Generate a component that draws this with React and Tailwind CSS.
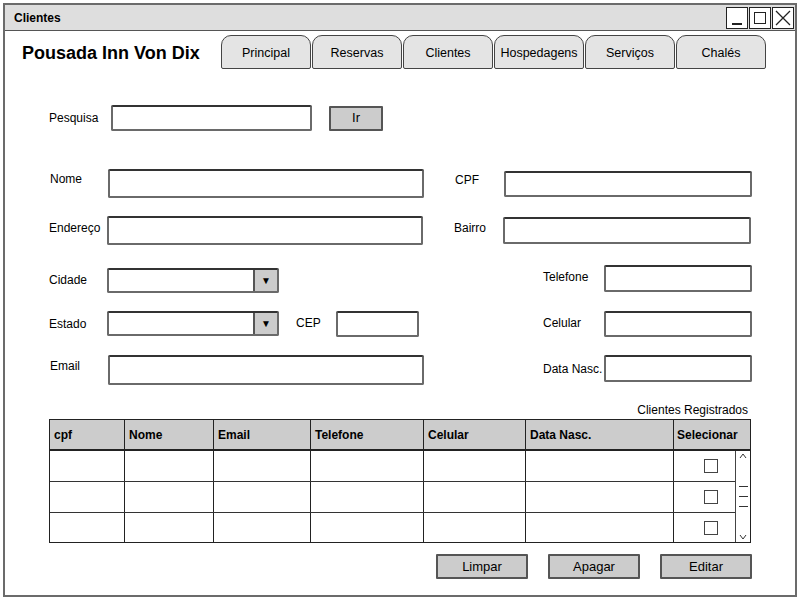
import React from "react";

const tabs = ["Principal", "Reservas", "Clientes", "Hospedagens", "Serviços", "Chalés"];
const cols = [
    { name: "cpf", w: "w-[75px]" },
    { name: "Nome", w: "w-[89px]" },
    { name: "Email", w: "w-[97px]" },
    { name: "Telefone", w: "w-[113px]" },
    { name: "Celular", w: "w-[102px]" },
    { name: "Data Nasc.", w: "w-[148px]" },
];

function Input({ className }) {
    return (
        <div
            className={
                "border-2 border-[#6a6a6a] border-t-[#333] rounded-[2px] bg-white " +
                className
            }
        />
    );
}

function Select() {
    return (
        <div className="flex w-[172px] h-[25px] border-2 border-[#6a6a6a] border-t-[#333] rounded-[2px] bg-white">
            <div className="flex-1" />
            <div className="w-[24px] bg-[#cccccc] border-l-2 border-[#555] flex items-center justify-center text-[10px] text-black">
                ▼
            </div>
        </div>
    );
}

function Label({ children, className }) {
    return <div className={"text-[12px] text-black " + className}>{children}</div>;
}

function GrayButton({ children, className }) {
    return (
        <button
            className={
                "h-[25px] bg-[#cccccc] border-2 border-[#555] rounded-[1px] text-[13px] text-black flex items-center justify-center " +
                className
            }
        >
            {children}
        </button>
    );
}

export default function App() {
    return (
        <div className="w-[800px] h-[600px] bg-white pt-[3px] pl-[3px] font-['Comic_Sans_MS','Liberation_Sans',sans-serif] text-black">
            <div className="w-[794px] h-[594px] border-2 border-[#6b6b6b] flex flex-col">
                {/* title bar */}
                <div className="h-[26px] bg-[#dedede] border-b border-[#555] flex items-center pl-[9px] pr-[1px]">
                    <span className="text-[12px] font-bold flex-1">Clientes</span>
                    <div className="flex gap-[1px]">
                        <div className="w-[22px] h-[22px] border border-[#222] bg-white flex items-end justify-center pb-[3px]">
                            <div className="w-[10px] h-[1.5px] bg-[#222]" />
                        </div>
                        <div className="w-[22px] h-[22px] border border-[#222] bg-white flex items-center justify-center">
                            <div className="w-[12px] h-[12px] border-[1.5px] border-[#222]" />
                        </div>
                        <div className="w-[22px] h-[22px] border border-[#222] bg-white flex items-center justify-center">
                            <svg width="16" height="16" viewBox="0 0 16 16" stroke="#222" strokeWidth="1.3">
                                <path d="M1 1 L15 15 M15 1 L1 15" />
                            </svg>
                        </div>
                    </div>
                </div>

                {/* header */}
                <div className="flex items-center mt-[4px] h-[34px]">
                    <div className="w-[216px] pl-[17px] text-[18px] font-bold whitespace-nowrap pt-[3px]">
                        Pousada Inn Von Dix
                    </div>
                    <div className="flex gap-[1px]">
                        {tabs.map((t) => (
                            <div
                                key={t}
                                className="w-[90px] h-[34px] bg-[#e4e4e4] border border-[#444] rounded-t-[10px] rounded-b-[2px] flex justify-center pt-[8px] text-[12.5px] whitespace-nowrap"
                            >
                                {t}
                            </div>
                        ))}
                    </div>
                </div>

                {/* pesquisa */}
                <div className="flex items-center mt-[36px] h-[26px]">
                    <Label className="ml-[44px] w-[62px]">Pesquisa</Label>
                    <Input className="w-[201px] h-[26px]" />
                    <GrayButton className="ml-[17px] w-[54px] text-[12px]">Ir</GrayButton>
                </div>

                {/* nome / cpf */}
                <div className="flex items-center mt-[38px] h-[29px]">
                    <Label className="ml-[45px] w-[58px] pb-[9px]">Nome</Label>
                    <Input className="w-[316px] h-[29px]" />
                    <Label className="ml-[31px] w-[49px] pb-[8px]">CPF</Label>
                    <Input className="w-[248px] h-[26px]" />
                </div>

                {/* endereco / bairro */}
                <div className="flex items-center mt-[18px] h-[29px]">
                    <Label className="ml-[44px] w-[58px] pb-[6px]">Endereço</Label>
                    <Input className="w-[316px] h-[29px]" />
                    <Label className="ml-[31px] w-[49px] pb-[6px]">Bairro</Label>
                    <Input className="w-[248px] h-[27px]" />
                </div>

                {/* cidade / telefone */}
                <div className="flex items-center mt-[19px] h-[28px]">
                    <Label className="ml-[44px] w-[58px] pt-[4px]">Cidade</Label>
                    <div className="pt-[4px]">
                        <Select />
                    </div>
                    <Label className="ml-[264px] w-[61px] pb-[2px]">Telefone</Label>
                    <Input className="w-[148px] h-[27px]" />
                </div>

                {/* estado / cep / celular */}
                <div className="flex items-center mt-[18px] h-[27px]">
                    <Label className="ml-[44px] w-[58px]">Estado</Label>
                    <Select />
                    <Label className="ml-[17px] w-[40px] pb-[2px]">CEP</Label>
                    <Input className="w-[83px] h-[26px]" />
                    <Label className="ml-[124px] w-[61px] pb-[2px]">Celular</Label>
                    <Input className="w-[148px] h-[26px]" />
                </div>

                {/* email / data nasc */}
                <div className="flex items-center mt-[18px] h-[30px]">
                    <Label className="ml-[45px] w-[58px] pb-[8px]">Email</Label>
                    <Input className="w-[316px] h-[30px]" />
                    <Label className="ml-[119px] w-[61px] pb-[2px] whitespace-nowrap">Data Nasc.</Label>
                    <Input className="w-[148px] h-[27px] self-start" />
                </div>

                <div className="mt-[17px] h-[16px] pr-[47px] text-right text-[12px] leading-[16px]">
                    Clientes Registrados
                </div>

                {/* table */}
                <div className="ml-[44px] mt-[1px] w-[702px] border-[1.5px] border-[#222]">
                    <div className="flex h-[31px] bg-[#cccccc] border-b-2 border-[#222] text-[12px] font-bold">
                        {cols.map((c) => (
                            <div key={c.name} className={c.w + " border-r-[1.5px] border-[#222] pl-[4px] flex items-center"}>
                                {c.name}
                            </div>
                        ))}
                        <div className="flex-1 pl-[3px] flex items-center">Selecionar</div>
                    </div>
                    <div className="flex">
                        <div className="flex-1">
                            {[0, 1, 2].map((r) => (
                                <div
                                    key={r}
                                    className={
                                        "flex " + (r < 2 ? "h-[31px] border-b-[1.5px] border-[#333]" : "h-[29px]")
                                    }
                                >
                                    {cols.map((c) => (
                                        <div key={c.name} className={c.w + " border-r-[1.5px] border-[#222]"} />
                                    ))}
                                    <div className="flex-1 flex items-center pl-[30px]">
                                        <div className="w-[14px] h-[14px] border border-[#444] bg-white" />
                                    </div>
                                </div>
                            ))}
                        </div>
                        <div className="w-[15px] border-l border-[#444] flex flex-col items-center justify-between py-[1px]">
                            <svg width="10" height="8" viewBox="0 0 10 8" stroke="#333" fill="none" strokeWidth="1">
                                <path d="M2 6 L5 2 L8 6" />
                            </svg>
                            <div className="flex flex-col gap-[9px] w-[9px]">
                                <div className="h-[1px] bg-[#333]" />
                                <div className="h-[1px] bg-[#333]" />
                                <div className="h-[1px] bg-[#333]" />
                            </div>
                            <svg width="10" height="8" viewBox="0 0 10 8" stroke="#333" fill="none" strokeWidth="1">
                                <path d="M2 2 L5 6 L8 2" />
                            </svg>
                        </div>
                    </div>
                </div>

                {/* buttons */}
                <div className="flex justify-end gap-[20px] pr-[43px] mt-[11px]">
                    <GrayButton className="w-[92px]">Limpar</GrayButton>
                    <GrayButton className="w-[92px]">Apagar</GrayButton>
                    <GrayButton className="w-[92px]">Editar</GrayButton>
                </div>
            </div>
        </div>
    );
}
